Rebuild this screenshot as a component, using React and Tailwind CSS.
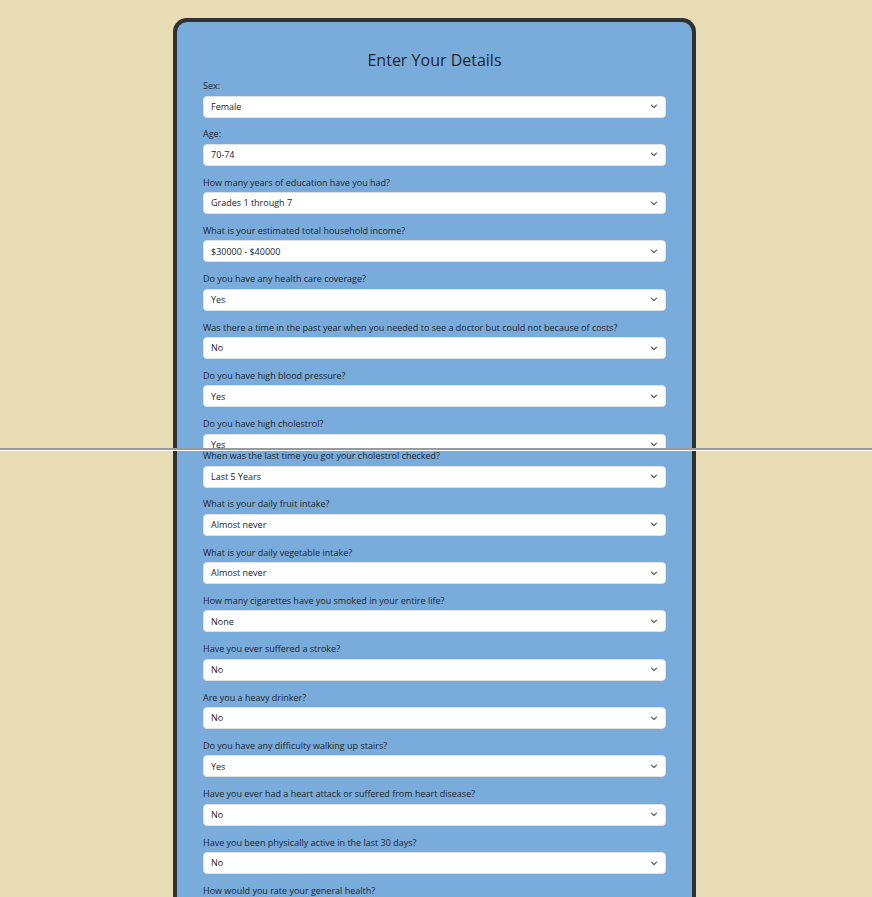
const topFields = [
  { label: "Sex:", value: "Female" },
  { label: "Age:", value: "70-74" },
  { label: "How many years of education have you had?", value: "Grades 1 through 7" },
  { label: "What is your estimated total household income?", value: "$30000 - $40000" },
  { label: "Do you have any health care coverage?", value: "Yes" },
  { label: "Was there a time in the past year when you needed to see a doctor but could not because of costs?", value: "No" },
  { label: "Do you have high blood pressure?", value: "Yes" },
  { label: "Do you have high cholestrol?", value: "Yes" },
];

const bottomFields = [
  { label: "When was the last time you got your cholestrol checked?", value: "Last 5 Years" },
  { label: "What is your daily fruit intake?", value: "Almost never" },
  { label: "What is your daily vegetable intake?", value: "Almost never" },
  { label: "How many cigarettes have you smoked in your entire life?", value: "None" },
  { label: "Have you ever suffered a stroke?", value: "No" },
  { label: "Are you a heavy drinker?", value: "No" },
  { label: "Do you have any difficulty walking up stairs?", value: "Yes" },
  { label: "Have you ever had a heart attack or suffered from heart disease?", value: "No" },
  { label: "Have you been physically active in the last 30 days?", value: "No" },
  { label: "How would you rate your general health?", value: "Good" },
];

const Chevron = () => (
  <svg width="8" height="5" viewBox="0 0 8 5" fill="none" className="shrink-0">
    <path d="M1.5 1.2l2.5 2.4 2.5-2.4" stroke="#4a4f55" strokeWidth="1.1" strokeLinecap="round" strokeLinejoin="round" />
  </svg>
);

const Field = ({ label, value }) => (
  <div className="h-[48.33px] flex flex-col">
    <label className="h-[13px] leading-[13px] text-[9px] text-[#212529]">{label}</label>
    <div className="mt-[3.5px] h-[22px] bg-white rounded-[4px] border border-[#dee2e6] flex items-center justify-between pl-[7px] pr-[7px]">
      <span className="text-[9px] text-[#212529]">{value}</span>
      <Chevron />
    </div>
  </div>
);

export default function App() {
  return (
    <div className="min-h-screen bg-[#e8dcb5] font-['Open_Sans',sans-serif] overflow-hidden">
      {/* first capture */}
      <div className="h-[448px] overflow-hidden pt-[18px]">
        <div className="w-[523px] ml-[173px] bg-[#79acdb] border-[4px] border-[#2f3133] rounded-t-[14px] border-b-0 px-[26px] pt-[26px] h-[600px]">
          <h2 className="text-center text-[16px] font-medium text-[#212529] leading-[24px] mb-[7px]">Enter Your Details</h2>
          {topFields.map((f) => (
            <Field key={f.label} {...f} />
          ))}
        </div>
      </div>
      {/* seam */}
      <div className="h-[2px] bg-[#9a9a9a]" />
      <div className="h-px bg-white" />
      {/* second capture */}
      <div className="h-[446px] overflow-hidden">
        <div className="w-[523px] ml-[173px] bg-[#79acdb] border-x-[4px] border-[#2f3133] px-[26px] -mt-[2px] h-[600px]">
          {bottomFields.map((f) => (
            <Field key={f.label} {...f} />
          ))}
        </div>
      </div>
    </div>
  );
}
